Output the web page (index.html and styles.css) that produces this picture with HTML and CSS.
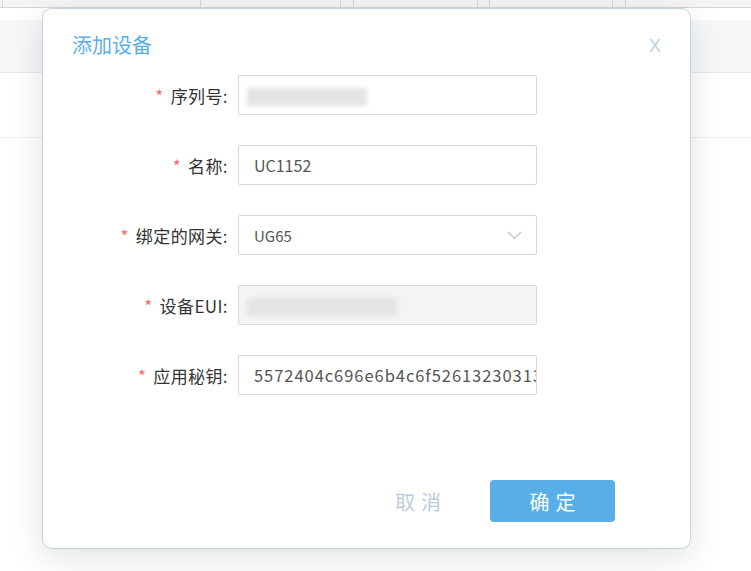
FILE: index.html
```html
<!DOCTYPE html>
<html>

<head>
    <meta charset="utf-8">
    <title>添加设备</title>
    <link rel="stylesheet" href="styles.css">
</head>

<body>
    <div class="page">
        <div class="toolbar">
            <span class="cell" style="width: 3px"></span>
            <span class="cell" style="width: 198px"></span>
            <span class="cell" style="width: 140px"></span>
            <span class="cell" style="width: 13px"></span>
            <span class="cell" style="width: 124px"></span>
            <span class="cell" style="width: 12px"></span>
            <span class="cell" style="width: 123px"></span>
            <span class="cell" style="width: 13px"></span>
            <span class="cell cell-last"></span>
        </div>
        <div class="table-head"></div>
        <div class="table-row"></div>
    </div>

    <div class="dialog">
        <div class="dialog-header">
            <span class="dialog-title">添加设备</span>
            <span class="dialog-close">X</span>
        </div>
        <div class="dialog-body">
            <div class="form-row">
                <label class="form-label"><i>*</i>序列号:</label>
                <div class="form-input">
                    <span class="masked" style="width: 120px"></span>
                </div>
            </div>
            <div class="form-row">
                <label class="form-label"><i>*</i>名称:</label>
                <div class="form-input">UC1152</div>
            </div>
            <div class="form-row">
                <label class="form-label"><i>*</i>绑定的网关:</label>
                <div class="form-input form-select">
                    <span>UG65</span>
                    <svg class="arrow" width="15" height="9" viewBox="0 0 15 9">
                        <path d="M1 1 L7.5 7.5 L14 1" fill="none" stroke="#b9c0c8" stroke-width="1.2" />
                    </svg>
                </div>
            </div>
            <div class="form-row">
                <label class="form-label"><i>*</i>设备EUI:</label>
                <div class="form-input is-disabled">
                    <span class="masked" style="width: 150px"></span>
                </div>
            </div>
            <div class="form-row">
                <label class="form-label"><i>*</i>应用秘钥:</label>
                <div class="form-input form-key">5572404c696e6b4c6f5261323031323</div>
            </div>
        </div>
        <div class="dialog-footer">
            <button class="btn btn-text">取消</button>
            <button class="btn btn-primary">确定</button>
        </div>
    </div>
</body>

</html>
```

FILE: styles.css
```css
* {
    margin: 0;
    padding: 0;
    box-sizing: border-box;
}

body {
    width: 751px;
    height: 571px;
    overflow: hidden;
    background-color: #fff;
    font-family: "Microsoft YaHei", "Noto Sans CJK SC", "Noto Sans", sans-serif;
    color: #333;
    position: relative;
}

/* page behind the dialog */
.toolbar {
    display: flex;
    height: 8px;
    background-color: #f5f5f5;
    border-bottom: 1px solid #cfd6dc;
}

.toolbar .cell {
    height: 7px;
    border-right: 1px solid #d6d6d6;
}

.toolbar .cell-last {
    flex: 1;
    border-right: none;
}

.table-head {
    height: 53px;
    margin-top: 12px;
    background-color: #f6f7f9;
    border-bottom: 1px solid #e6e8eb;
}

.table-row {
    height: 65px;
    border-bottom: 1px solid #eceef0;
}

/* dialog */
.dialog {
    position: absolute;
    left: 42px;
    top: 8px;
    width: 649px;
    height: 541px;
    background-color: #fff;
    border: 1px solid #c3d3df;
    border-radius: 10px;
    box-shadow: 0 8px 34px rgba(0, 0, 0, 0.12);
    display: flex;
    flex-direction: column;
}

.dialog-header {
    display: flex;
    justify-content: space-between;
    align-items: center;
    padding: 17px 29px 0 29px;
    height: 55px;
}

.dialog-title {
    font-size: 20px;
    color: #5aaee8;
    line-height: 28px;
}

.dialog-close {
    font-family: "Liberation Sans", sans-serif;
    font-size: 18px;
    color: #bcd0e0;
    margin-top: 2px;
}

.dialog-body {
    padding-top: 11px;
    display: flex;
    flex-direction: column;
    gap: 30px;
}

.form-row {
    display: flex;
    align-items: center;
    height: 40px;
}

.form-label {
    width: 195px;
    text-align: right;
    padding-right: 10px;
    font-size: 17px;
    letter-spacing: 0.4px;
    color: #333;
}

.form-label i {
    font-style: normal;
    color: #f46e6e;
    margin-right: 7px;
    font-size: 17px;
}

.form-input {
    width: 299px;
    height: 40px;
    border: 1px solid #d6d9dc;
    border-radius: 2px;
    padding: 0 15px;
    display: flex;
    align-items: center;
    font-size: 16px;
    color: #555;
    white-space: nowrap;
    overflow: hidden;
}

.form-input.is-disabled {
    background-color: #f4f4f4;
}

.form-select {
    justify-content: space-between;
    font-size: 15px;
    padding-right: 14px;
}

.form-key {
    font-size: 16.5px;
    letter-spacing: 0.95px;
}

.masked {
    display: block;
    height: 18px;
    margin-left: -7px;
    margin-top: 4px;
    background-color: #e4e4e4;
    filter: blur(2px);
}

.dialog-footer {
    margin-top: auto;
    display: flex;
    justify-content: flex-end;
    align-items: center;
    gap: 43px;
    padding: 0 75px 26px 0;
}

.btn {
    border: none;
    background: none;
    font-family: inherit;
    font-size: 20px;
    letter-spacing: 6px;
    cursor: pointer;
}

.btn-text {
    color: #b9cddc;
}

.btn-primary {
    width: 125px;
    height: 42px;
    background-color: #58aee6;
    color: #fff;
    border-radius: 4px;
    padding-left: 6px;
}
```
